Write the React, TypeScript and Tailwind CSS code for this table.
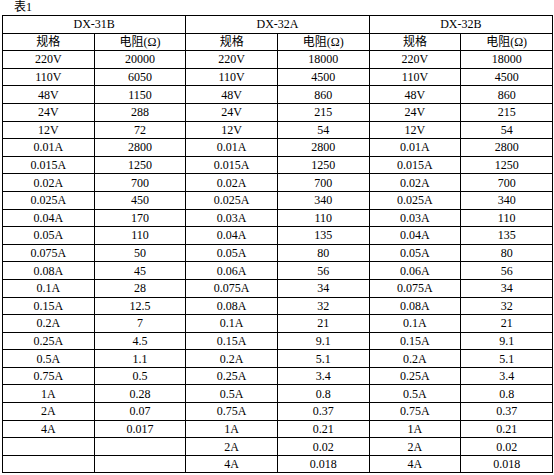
const groups = [
  {
    name: 'DX-31B',
    rows: [
      ['220V', '20000'], ['110V', '6050'], ['48V', '1150'], ['24V', '288'], ['12V', '72'],
      ['0.01A', '2800'], ['0.015A', '1250'], ['0.02A', '700'], ['0.025A', '450'], ['0.04A', '170'],
      ['0.05A', '110'], ['0.075A', '50'], ['0.08A', '45'], ['0.1A', '28'], ['0.15A', '12.5'],
      ['0.2A', '7'], ['0.25A', '4.5'], ['0.5A', '1.1'], ['0.75A', '0.5'], ['1A', '0.28'],
      ['2A', '0.07'], ['4A', '0.017'], ['', ''], ['', ''],
    ],
  },
  {
    name: 'DX-32A',
    rows: [
      ['220V', '18000'], ['110V', '4500'], ['48V', '860'], ['24V', '215'], ['12V', '54'],
      ['0.01A', '2800'], ['0.015A', '1250'], ['0.02A', '700'], ['0.025A', '340'], ['0.03A', '110'],
      ['0.04A', '135'], ['0.05A', '80'], ['0.06A', '56'], ['0.075A', '34'], ['0.08A', '32'],
      ['0.1A', '21'], ['0.15A', '9.1'], ['0.2A', '5.1'], ['0.25A', '3.4'], ['0.5A', '0.8'],
      ['0.75A', '0.37'], ['1A', '0.21'], ['2A', '0.02'], ['4A', '0.018'],
    ],
  },
  {
    name: 'DX-32B',
    rows: [
      ['220V', '18000'], ['110V', '4500'], ['48V', '860'], ['24V', '215'], ['12V', '54'],
      ['0.01A', '2800'], ['0.015A', '1250'], ['0.02A', '700'], ['0.025A', '340'], ['0.03A', '110'],
      ['0.04A', '135'], ['0.05A', '80'], ['0.06A', '56'], ['0.075A', '34'], ['0.08A', '32'],
      ['0.1A', '21'], ['0.15A', '9.1'], ['0.2A', '5.1'], ['0.25A', '3.4'], ['0.5A', '0.8'],
      ['0.75A', '0.37'], ['1A', '0.21'], ['2A', '0.02'], ['4A', '0.018'],
    ],
  },
];

const cell = 'border border-black h-[17.6px] p-0 text-center align-middle leading-none';

export default function App() {
  return (
    <div
      className="w-[554px] h-[475px] bg-white text-black text-[12px] overflow-hidden"
      style={{ fontFamily: '"Liberation Serif", "Noto Sans CJK SC", serif' }}
    >
      {/* title */}
      <div className="h-[15px] pl-[14px] pt-[1px] leading-[13px]">表1</div>

      <table className="ml-[2px] w-[551px] border-collapse table-fixed">
        <thead>
          <tr>
            {groups.map((g) => (
              <th key={g.name} colSpan={2} className={`${cell} font-normal`}>
                {g.name}
              </th>
            ))}
          </tr>
          <tr>
            {groups.map((g) => [
              <th key={g.name + 'a'} className={`${cell} font-normal`}>规格</th>,
              <th key={g.name + 'b'} className={`${cell} font-normal`}>电阻(Ω)</th>,
            ])}
          </tr>
        </thead>
        <tbody>
          {groups[0].rows.map((_, i) => (
            <tr key={i}>
              {groups.map((g) => [
                <td key={g.name + 'a'} className={cell}>{g.rows[i][0]}</td>,
                <td key={g.name + 'b'} className={cell}>{g.rows[i][1]}</td>,
              ])}
            </tr>
          ))}
        </tbody>
      </table>
    </div>
  );
}
